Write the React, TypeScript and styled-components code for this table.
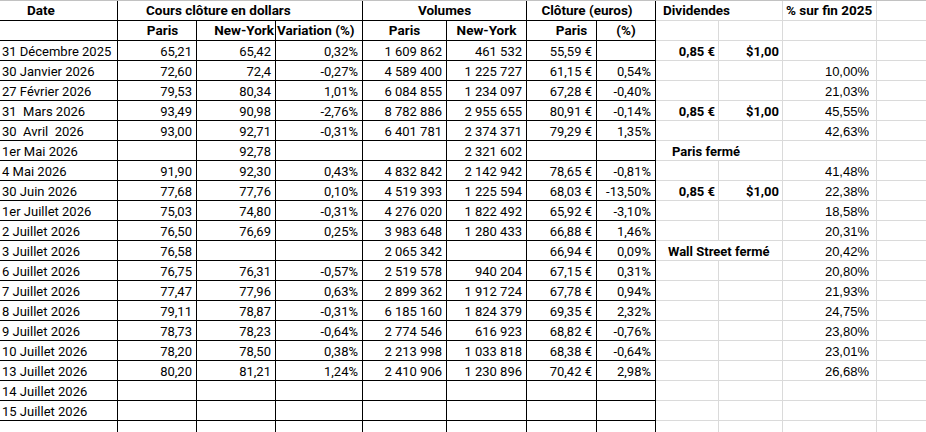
import React from "react";
import styled, { createGlobalStyle, css } from "styled-components";

type Tone = "dark" | "light";
type Align = "left" | "center" | "right";

interface Row {
  date: string;
  values: string[];
  dividend?: boolean;
  note?: { text: string; indent: number };
  gain?: string;
}

const rows: Row[] = [
  { date: "31 Décembre 2025", values: ["65,21", "65,42", "0,32%", "1 609 862", "461 532", "55,59 €", ""], dividend: true },
  { date: "30 Janvier 2026", values: ["72,60", "72,4", "-0,27%", "4 589 400", "1 225 727", "61,15 €", "0,54%"], gain: "10,00%" },
  { date: "27 Février 2026", values: ["79,53", "80,34", "1,01%", "6 084 855", "1 234 097", "67,28 €", "-0,40%"], gain: "21,03%" },
  { date: "31  Mars 2026", values: ["93,49", "90,98", "-2,76%", "8 782 886", "2 955 655", "80,91 €", "-0,14%"], dividend: true, gain: "45,55%" },
  { date: "30  Avril  2026", values: ["93,00", "92,71", "-0,31%", "6 401 781", "2 374 371", "79,29 €", "1,35%"], gain: "42,63%" },
  { date: "1er Mai 2026", values: ["", "92,78", "", "", "2 321 602", "", ""], note: { text: "Paris fermé", indent: 16 } },
  { date: "4 Mai 2026", values: ["91,90", "92,30", "0,43%", "4 832 842", "2 142 942", "78,65 €", "-0,81%"], gain: "41,48%" },
  { date: "30 Juin 2026", values: ["77,68", "77,76", "0,10%", "4 519 393", "1 225 594", "68,03 €", "-13,50%"], dividend: true, gain: "22,38%" },
  { date: "1er Juillet 2026", values: ["75,03", "74,80", "-0,31%", "4 276 020", "1 822 492", "65,92 €", "-3,10%"], gain: "18,58%" },
  { date: "2 Juillet 2026", values: ["76,50", "76,69", "0,25%", "3 983 648", "1 280 433", "66,88 €", "1,46%"], gain: "20,31%" },
  { date: "3 Juillet 2026", values: ["76,58", "", "", "2 065 342", "", "66,94 €", "0,09%"], note: { text: "Wall Street fermé", indent: 12 }, gain: "20,42%" },
  { date: "6 Juillet 2026", values: ["76,75", "76,31", "-0,57%", "2 519 578", "940 204", "67,15 €", "0,31%"], gain: "20,80%" },
  { date: "7 Juillet 2026", values: ["77,47", "77,96", "0,63%", "2 899 362", "1 912 724", "67,78 €", "0,94%"], gain: "21,93%" },
  { date: "8 Juillet 2026", values: ["79,11", "78,87", "-0,31%", "6 185 160", "1 824 379", "69,35 €", "2,32%"], gain: "24,75%" },
  { date: "9 Juillet 2026", values: ["78,73", "78,23", "-0,64%", "2 774 546", "616 923", "68,82 €", "-0,76%"], gain: "23,80%" },
  { date: "10 Juillet 2026", values: ["78,20", "78,50", "0,38%", "2 213 998", "1 033 818", "68,38 €", "-0,64%"], gain: "23,01%" },
  { date: "13 Juillet 2026", values: ["80,20", "81,21", "1,24%", "2 410 906", "1 230 896", "70,42 €", "2,98%"], gain: "26,68%" },
  { date: "14 Juillet 2026", values: ["", "", "", "", "", "", ""] },
  { date: "15 Juillet 2026", values: ["", "", "", "", "", "", ""] },
  { date: "", values: ["", "", "", "", "", "", ""] },
];

const App: React.FunctionComponent = () => {
  return (
    <>
      <GlobalStyle />
      <Sheet>
        <HeaderCell tone="dark" align="left" padLeft={27}>
          Date
        </HeaderCell>
        <HeaderCell tone="dark" span={3} align="left" padLeft={28}>
          Cours clôture en dollars
        </HeaderCell>
        <HeaderCell tone="dark" span={2} align="center">
          Volumes
        </HeaderCell>
        <HeaderCell tone="dark" span={2} align="center" padRight={8}>
          Clôture (euros)
        </HeaderCell>
        <HeaderCell tone="light" span={2} align="left" padLeft={7}>
          Dividendes
        </HeaderCell>
        <HeaderCell tone="light" align="left" padLeft={3}>
          % sur fin 2025
        </HeaderCell>
        <EdgeCell tone="light" />

        <BlankCell tone="dark" />
        <HeaderCell tone="dark" align="center" padLeft={11}>
          Paris
        </HeaderCell>
        <HeaderCell tone="dark" align="right" padRight={1}>
          New-York
        </HeaderCell>
        <HeaderCell tone="dark" align="left" padLeft={1}>
          Variation (%)
        </HeaderCell>
        <HeaderCell tone="dark" align="center">
          Paris
        </HeaderCell>
        <HeaderCell tone="dark" align="center">
          New-York
        </HeaderCell>
        <HeaderCell tone="dark" align="center" padLeft={20}>
          Paris
        </HeaderCell>
        <HeaderCell tone="dark" align="center">
          (%)
        </HeaderCell>
        <BlankCell tone="light" />
        <BlankCell tone="light" />
        <BlankCell tone="light" />
        <EdgeCell tone="light" />

        {rows.map((row, i) => (
          <React.Fragment key={i}>
            <DateCell tone="dark">{row.date}</DateCell>
            {row.values.map((v, j) => (
              <NumCell key={j} tone="dark">
                {v}
              </NumCell>
            ))}
            {row.note ? (
              <NoteCell tone="light" span={2} indent={row.note.indent}>
                {row.note.text}
              </NoteCell>
            ) : (
              <>
                <DividendCell tone="light">{row.dividend ? "0,85 €" : ""}</DividendCell>
                <DividendCell tone="light">{row.dividend ? "$1,00" : ""}</DividendCell>
              </>
            )}
            <GainCell tone="light">{row.gain ?? ""}</GainCell>
            <EdgeCell tone="light" />
          </React.Fragment>
        ))}
      </Sheet>
    </>
  );
};

export default App;

const GlobalStyle = createGlobalStyle`
  html, body {
    margin: 0;
    padding: 0;
    background: #ffffff;
  }
  body {
    overflow: hidden;
    font-family: Roboto, "Noto Sans", sans-serif;
    color: #000000;
  }
`;

const Sheet = styled("div")`
  display: grid;
  grid-template-columns: 118px 79px 79px 87px 84px 80px 70px 59px 63px 64px 94px 1fr;
  grid-auto-rows: 20px;
  width: 926px;
  border-top: 1px solid #c2c2c2;
`;

const Cell = styled("div").withConfig({
  shouldForwardProp: (prop) => !["tone", "span"].includes(prop),
})<{ tone: Tone; span?: number }>`
  box-sizing: border-box;
  grid-column: span ${({ span }) => span ?? 1};
  display: flex;
  align-items: center;
  padding-top: 1px;
  font-size: 13px;
  line-height: 1;
  white-space: pre;
  overflow: visible;
  ${({ tone }) =>
    tone === "dark"
      ? css`
          border-right: 1px solid #000000;
          border-bottom: 1px solid #000000;
        `
      : css`
          border-right: 1px solid #dadada;
          border-bottom: 1px solid #dadada;
        `}
`;

const HeaderCell = styled(Cell).withConfig({
  shouldForwardProp: (prop) => !["align", "padLeft", "padRight"].includes(prop),
})<{ align: Align; padLeft?: number; padRight?: number }>`
  font-weight: 700;
  font-size: 13.5px;
  justify-content: ${({ align }) =>
    align === "left" ? "flex-start" : align === "right" ? "flex-end" : "center"};
  padding-left: ${({ padLeft }) => padLeft ?? 0}px;
  padding-right: ${({ padRight }) => padRight ?? 0}px;
`;

const BlankCell = styled(Cell)``;

// last visible column runs off the right edge of the window
const EdgeCell = styled(Cell)`
  border-right: none;
`;

const DateCell = styled(Cell)`
  justify-content: flex-start;
  padding-left: 2px;
`;

const NumCell = styled(Cell)`
  justify-content: flex-end;
  padding-right: 4px;
`;

const DividendCell = styled(Cell)`
  justify-content: flex-end;
  padding-right: 3px;
  font-weight: 700;
`;

const NoteCell = styled(Cell).withConfig({
  shouldForwardProp: (prop) => !["indent"].includes(prop),
})<{ indent: number }>`
  justify-content: flex-start;
  padding-left: ${({ indent }) => indent}px;
  font-weight: 700;
`;

const GainCell = styled(Cell)`
  justify-content: flex-end;
  padding-right: 7px;
  font-family: "Liberation Sans", Arial, sans-serif;
  font-size: 13px;
`;
